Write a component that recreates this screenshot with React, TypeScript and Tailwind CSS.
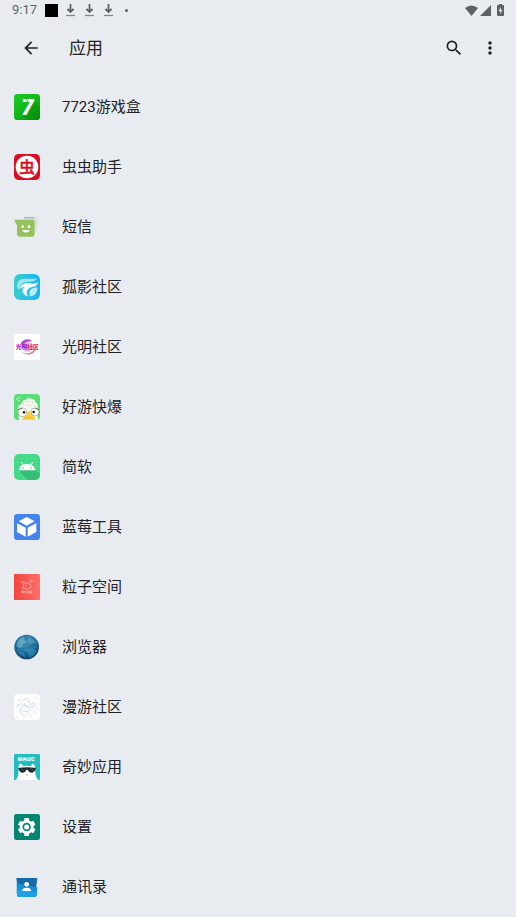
import React from 'react'
import { MdArrowBack, MdMoreVert, MdSearch } from 'react-icons/md'

type AppEntry = {
  name: string
  icon: React.ReactNode
}

type IconProps = {
  children: React.ReactNode
}

const Icon: React.FC<IconProps> = ({ children }) => (
  <svg viewBox="0 0 78 78" className="size-[26px] shrink-0" aria-hidden="true">
    {children}
  </svg>
)

const GameBoxIcon = () => (
  <Icon>
    <defs>
      <linearGradient id="gamebox" x1="0" y1="0" x2="1" y2="1">
        <stop offset="0" stopColor="#22c82b" />
        <stop offset="0.5" stopColor="#10b819" />
        <stop offset="1" stopColor="#078d0e" />
      </linearGradient>
    </defs>
    <rect width="78" height="78" rx="10" fill="url(#gamebox)" />
    <path d="M60 20L78 38V68Q78 78 68 78H40L24 64Z" fill="#078a0e" opacity="0.35" />
    <text
      x="40"
      y="62"
      textAnchor="middle"
      fontFamily="Roboto, sans-serif"
      fontSize="66"
      fontWeight="900"
      fontStyle="italic"
      fill="#fff"
    >
      7
    </text>
    <path d="M35 12L44 28" stroke="#1fbb28" strokeWidth="3" />
  </Icon>
)

const BugHelperIcon = () => (
  <Icon>
    <rect width="78" height="78" rx="14" fill="#d80f24" />
    <circle cx="39" cy="39" r="34" fill="#fff" />
    <text
      x="39"
      y="56"
      textAnchor="middle"
      fontFamily="'Noto Sans CJK SC', sans-serif"
      fontSize="48"
      fontWeight="500"
      fill="#d80f24"
      stroke="#d80f24"
      strokeWidth="1"
    >
      虫
    </text>
  </Icon>
)

const MessagesIcon = () => (
  <Icon>
    <path d="M28 8H66Q72 8 71 14L67 52H52V18H28Z" fill="#dcdfe1" />
    <path d="M30 9H60V13H30Z" fill="#b4b7b8" />
    <path d="M0 17H56Q62 17 62 23V61Q62 68 55 68H16Q9 68 9 61V34Z" fill="#94c35c" />
    <circle cx="26" cy="38" r="4" fill="#fff" />
    <circle cx="45" cy="38" r="4" fill="#fff" />
    <path d="M23 48H48Q36 64 23 48Z" fill="#fff" />
  </Icon>
)

const GuyingIcon = () => (
  <Icon>
    <defs>
      <linearGradient id="guying" x1="0" y1="0" x2="1" y2="0">
        <stop offset="0" stopColor="#3accce" />
        <stop offset="1" stopColor="#16b4f5" />
      </linearGradient>
    </defs>
    <rect width="78" height="78" rx="18" fill="url(#guying)" />
    <path d="M9 32Q12 14 32 14H69Q64 23 48 23Q30 22 21 32Q14 40 15 48Q8 42 9 32Z" fill="#9fe4e6" />
    <path d="M23 33Q35 24 48 28Q63 31 72 25Q70 37 54 39Q43 41 39 50Q36 60 43 68Q27 63 25 52Q24 45 32 39Q23 39 17 46Q17 38 23 33Z" fill="#f2fdfd" />
    <path d="M49 67Q42 54 51 46Q59 40 70 40Q70 57 60 64Q54 67 49 67Z" fill="#b9eef7" />
  </Icon>
)

const GuangmingIcon = () => (
  <Icon>
    <rect width="78" height="78" rx="3" fill="#fff" />
    <path d="M20 27Q37 8 56 22Q37 19 27 36Z" fill="#a54bc6" />
    <path d="M24 50Q36 67 58 51Q70 42 61 26Q73 46 56 58Q35 68 24 50Z" fill="#e95d8c" />
    <circle cx="41" cy="38" r="17" fill="#c77bdc" opacity="0.45" />
    <text
      y="45"
      textAnchor="middle"
      fontFamily="'Noto Sans CJK SC', sans-serif"
      fontSize="18"
      fontWeight="900"
    >
      <tspan x="14" fill="#b02bd0">光</tspan>
      <tspan x="31" fill="#9a28c4">明</tspan>
      <tspan x="48" fill="#e52d5a">社</tspan>
      <tspan x="65" fill="#ed383f">区</tspan>
    </text>
  </Icon>
)

const HaoyouIcon = () => (
  <Icon>
    <defs>
      <clipPath id="haoyouClip">
        <rect width="78" height="78" rx="12" />
      </clipPath>
    </defs>
    <g clipPath="url(#haoyouClip)">
      <rect width="78" height="78" fill="#55df76" />
      <path d="M9 12Q10 22 18 19M12 8L19 14" stroke="#c9f6d2" strokeWidth="3" fill="none" />
      <path
        d="M14 78V62Q8 52 13 42Q12 32 22 30Q24 18 34 18Q42 7 52 15Q62 14 64 24Q74 29 70 38Q76 44 72 54V78Z"
        fill="#f4f8ec"
      />
      <path
        d="M22 33Q27 27 32 33M36 22Q42 19 44 26M51 22Q58 23 57 29M39 35Q45 29 50 36M60 36Q65 35 65 41"
        stroke="#c3d3ba"
        strokeWidth="2"
        fill="none"
      />
      <path d="M24 78Q28 67 37 64Q40 51 47 52Q54 53 55 64Q64 68 65 78Z" fill="#f8d13c" />
      <path d="M32 73Q44 66 58 73" stroke="#dca92a" strokeWidth="2" fill="none" />
      <circle cx="25" cy="55" r="13" fill="#fff" stroke="#87927f" strokeWidth="2" />
      <circle cx="63" cy="54" r="12" fill="#fff" stroke="#87927f" strokeWidth="2" />
      <circle cx="30" cy="55" r="4" fill="#222" />
      <circle cx="59" cy="54" r="4" fill="#222" />
      <path d="M12 47L24 43M64 43L75 47" stroke="#39433a" strokeWidth="2" />
    </g>
  </Icon>
)

const JianruanIcon = () => (
  <Icon>
    <rect width="78" height="78" rx="15" fill="#40d986" />
    <path
      d="M13 0V78M26 0V78M39 0V78M52 0V78M65 0V78M0 13H78M0 26H78M0 39H78M0 52H78M0 65H78"
      stroke="#68e3a0"
      strokeWidth="1"
    />
    <path d="M62 46L78 61V64Q78 78 63 78H40L14 49Z" fill="#2dad6b" opacity="0.6" />
    <path d="M14 49Q16 31 39 30Q61 31 64 49Z" fill="#fff" />
    <path d="M22 25L28 35M56 25L50 35" stroke="#fff" strokeWidth="3" strokeLinecap="round" />
    <circle cx="27" cy="42" r="2" fill="#3ac77a" />
    <circle cx="51" cy="42" r="2" fill="#3ac77a" />
  </Icon>
)

const BlueberryIcon = () => (
  <Icon>
    <rect width="78" height="78" rx="10" fill="#4583ec" />
    <path d="M38 9L62 22L38 35L14 22Z" fill="#fff" />
    <path d="M9 28L35 41V68L9 54Z" fill="#fff" />
    <path d="M67 28L41 41V68L67 54Z" fill="#fff" />
  </Icon>
)

const ParticleIcon = () => (
  <Icon>
    <defs>
      <linearGradient id="particle" x1="0" y1="0" x2="1" y2="0">
        <stop offset="0" stopColor="#f2443f" />
        <stop offset="1" stopColor="#ff706b" />
      </linearGradient>
    </defs>
    <rect width="78" height="78" rx="2" fill="url(#particle)" />
    <g fill="none" stroke="#ffc6c0" strokeWidth="2">
      <path d="M29 29Q38 22 48 30Q55 42 42 46Q30 47 28 37Z" />
      <circle cx="26" cy="24" r="2" />
      <circle cx="52" cy="22" r="3" />
      <path d="M34 32L39 37M24 43L30 41" />
    </g>
    <text
      x="39"
      y="58"
      textAnchor="middle"
      fontFamily="'Noto Sans CJK SC', sans-serif"
      fontSize="8"
      fontWeight="700"
      fill="#ffe5e2"
    >
      粒子空间
    </text>
  </Icon>
)

const BrowserIcon = () => (
  <Icon>
    <defs>
      <radialGradient id="globe" cx="0.45" cy="0.3" r="0.75">
        <stop offset="0" stopColor="#4492b4" />
        <stop offset="0.5" stopColor="#20709e" />
        <stop offset="1" stopColor="#0f3a66" />
      </radialGradient>
    </defs>
    <circle cx="38" cy="39" r="37" fill="url(#globe)" />
    <path d="M9 26Q16 12 31 9L29 19L38 23L25 31L28 38L17 42L8 37Z" fill="#8fcdd2" opacity="0.5" />
    <path d="M43 8Q61 12 68 30L58 26L48 31L42 22Z" fill="#74bfca" opacity="0.4" />
    <path d="M35 49L57 44L68 50Q61 66 45 71L42 58Z" fill="#309fc4" opacity="0.5" />
    <path d="M7 50Q20 66 36 69L28 55Z" fill="#2a8fbd" opacity="0.6" />
    <path d="M12 45Q34 53 66 40" stroke="#46b4d8" strokeWidth="2" strokeDasharray="6 4" fill="none" />
  </Icon>
)

const ManyouIcon = () => (
  <Icon>
    <rect width="78" height="78" rx="12" fill="#fdfdfe" />
    <g fill="none" stroke="#94a9cc" strokeWidth="1">
      <path d="M12 21L17 14M7 43L14 28M18 35L25 21L36 12L47 18M24 44L31 28L38 43M44 22L52 31L59 24L65 34" />
      <path d="M28 34H36M42 35Q47 28 51 35Q49 43 42 42ZM54 35Q60 28 65 36Q60 44 54 41Z" />
      <path d="M24 48Q35 58 51 47M14 57L19 46L25 65M39 56L34 71M40 52L54 70M57 49L68 61M8 66L14 72M60 13L67 9" />
      <path d="M12 35Q22 38 19 51M31 19Q39 27 48 22M27 59L30 73M67 42L71 52" strokeDasharray="3 2" />
    </g>
  </Icon>
)

const MagicIcon = () => (
  <Icon>
    <rect width="78" height="78" rx="4" fill="#22bdbe" />
    <text
      x="37"
      y="22"
      textAnchor="middle"
      fontFamily="Roboto, sans-serif"
      fontSize="16"
      fontWeight="900"
      fill="#fff"
    >
      MAGIC
    </text>
    <path
      d="M6 78Q14 66 14 50Q12 30 19 29Q25 30 28 37Q38 34 50 37Q54 29 59 30Q64 34 63 50Q63 66 72 78Z"
      fill="#fff"
    />
    <path d="M12 42Q38 38 66 42L62 51Q56 59 46 54L40 47H37L33 54Q22 60 16 50Z" fill="#1d292e" />
    <path d="M23 44L29 51M51 43L57 50" stroke="#74868b" strokeWidth="2" />
    <path d="M36 62Q39 64 42 62" stroke="#8b9a9d" strokeWidth="2" fill="none" />
  </Icon>
)

const SettingsIcon = () => (
  <Icon>
    <rect width="78" height="78" rx="7" fill="#048572" />
    <g stroke="#fff" strokeWidth="14">
      <path d="M38 12V66" />
      <path d="M15 26L61 52" />
      <path d="M15 52L61 26" />
    </g>
    <circle cx="38" cy="39" r="21" fill="#fff" />
    <circle cx="38" cy="39" r="10" fill="none" stroke="#048572" strokeWidth="5" />
  </Icon>
)

const ContactsIcon = () => (
  <Icon>
    <path d="M7 12H70L66 44H11Z" fill="#1769a8" />
    <path d="M8 28L70 40L68 64Q67 69 62 69H15Q10 69 9 64Z" fill="#148fd5" />
    <path d="M8 46L68 55L67 65Q66 69 62 69H15Q10 69 9 64Z" fill="#1ea0e6" />
    <circle cx="38" cy="31" r="7" fill="#fff" />
    <path d="M24 51Q25 41 38 41Q51 41 52 51Z" fill="#fff" />
  </Icon>
)

const apps: AppEntry[] = [
  { name: '7723游戏盒', icon: <GameBoxIcon /> },
  { name: '虫虫助手', icon: <BugHelperIcon /> },
  { name: '短信', icon: <MessagesIcon /> },
  { name: '孤影社区', icon: <GuyingIcon /> },
  { name: '光明社区', icon: <GuangmingIcon /> },
  { name: '好游快爆', icon: <HaoyouIcon /> },
  { name: '简软', icon: <JianruanIcon /> },
  { name: '蓝莓工具', icon: <BlueberryIcon /> },
  { name: '粒子空间', icon: <ParticleIcon /> },
  { name: '浏览器', icon: <BrowserIcon /> },
  { name: '漫游社区', icon: <ManyouIcon /> },
  { name: '奇妙应用', icon: <MagicIcon /> },
  { name: '设置', icon: <SettingsIcon /> },
  { name: '通讯录', icon: <ContactsIcon /> },
]

const DownloadIcon = () => (
  <svg viewBox="0 0 9 13" className="h-[13px] w-[9px]" aria-hidden="true">
    <path d="M4.5 0V8M1.5 5L4.5 8L7.5 5" fill="none" stroke="#5f6265" strokeWidth="1.8" />
    <path d="M0 11.5H9" stroke="#85888b" strokeWidth="1.3" />
  </svg>
)

const StatusBar = () => (
  <div className="flex h-5 items-center justify-between px-3 text-[#5f6265]">
    <div className="flex items-center">
      <span className="w-[33px] text-[13px] leading-5">9:17</span>
      <span className="size-[13px] bg-black" />
      <div className="ml-2 flex gap-[10px]">
        <DownloadIcon />
        <DownloadIcon />
        <DownloadIcon />
      </div>
      <span className="ml-3 size-[3px] rounded-full bg-[#5f6265]" />
    </div>
    <div className="flex items-center">
      <svg viewBox="0 0 13 11" className="h-[11px] w-[13px]" aria-hidden="true">
        <path d="M0 3Q6.5-2 13 3L6.5 11Z" fill="currentColor" />
      </svg>
      <svg viewBox="0 0 11 11" className="ml-0.5 h-[11px] w-[11px]" aria-hidden="true">
        <path d="M11 0V11H0Z" fill="currentColor" />
      </svg>
      <svg viewBox="0 0 7 12" className="ml-1.5 h-3 w-[7px]" aria-hidden="true">
        <path d="M2 0H5V1H6Q7 1 7 2V11Q7 12 6 12H1Q0 12 0 11V2Q0 1 1 1H2Z" fill="currentColor" />
        <path d="M4 3L1.5 7H3.2V10L5.5 6H4Z" fill="#e8ecf1" />
      </svg>
    </div>
  </div>
)

const iconButton = 'flex size-9 items-center justify-center rounded-full'

const App = () => {
  return (
    <div className="min-h-screen bg-[#e8ecf1] font-['Roboto','Noto_Sans_CJK_SC',sans-serif] text-[#202225]">
      <StatusBar />
      <header className="flex h-14 items-center pr-2 pl-[13px]">
        <button type="button" aria-label="返回" className={iconButton}>
          <MdArrowBack size={20} />
        </button>
        <h1 className="ml-5 flex-1 text-[17px] leading-6">应用</h1>
        <button type="button" aria-label="搜索" className={iconButton}>
          <MdSearch size={20} />
        </button>
        <button type="button" aria-label="更多选项" className={iconButton}>
          <MdMoreVert size={20} />
        </button>
      </header>
      <main className="pt-px">
        <ul>
          {apps.map((app) => (
            <li key={app.name}>
              <button
                type="button"
                className="flex h-[60px] w-full items-center gap-[22px] px-[14px] text-left text-[15px] leading-6"
              >
                {app.icon}
                <span>{app.name}</span>
              </button>
            </li>
          ))}
        </ul>
      </main>
    </div>
  )
}

export default App
